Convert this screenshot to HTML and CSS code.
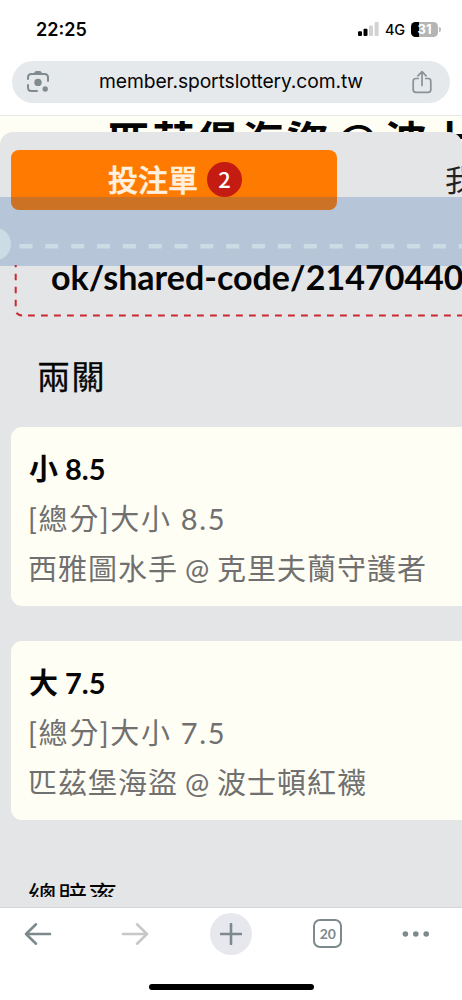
FILE: index.html
```html
<!DOCTYPE html>
<html lang="zh-Hant">
<head>
<meta charset="utf-8">
<meta name="viewport" content="width=device-width, initial-scale=1">
<title>投注單</title>
<link rel="stylesheet" href="styles.css">
</head>
<body>
<div class="screen">
  <header class="status">
    <span class="clock">22:25</span>
    <div class="indicators">
      <svg class="signal" width="21" height="14" viewBox="0 0 21 14"><rect x="0" y="9.2" width="4" height="4.8" rx="1"/><rect x="5.5" y="6.7" width="4" height="7.3" rx="1"/><rect class="weak" x="11" y="3.6" width="4" height="10.4" rx="1"/><rect class="weak" x="16.6" y="0" width="4" height="14" rx="1"/></svg>
      <span class="network">4G</span>
      <div class="battery"><span>31</span></div>
      <i class="battery-tip"></i>
    </div>
  </header>
  <div class="address-row">
    <div class="address">
      <svg width="24" height="24" viewBox="0 0 24 24" class="lens"><path d="M2 9V7.5Q2 4 5.5 4H18.5Q22 4 22 7.5V11M2 15V17.5Q2 21 5.5 21H11"/><path class="fill" d="M7 4.5L9 1.6Q9.5 1 10.5 1H13.5Q14.5 1 15 1.6L17 4.5Z"/><circle class="fill" cx="12" cy="12.4" r="3.7"/><circle class="fill" cx="19.2" cy="19" r="2.7"/></svg>
      <span class="url">member.sportslottery.com.tw</span>
      <svg width="20" height="24" viewBox="0 0 20 24" class="share"><path d="M6.3 8.5H4Q1.2 8.5 1.2 11.3V19.7Q1.2 22.3 4 22.3H16Q18.8 22.3 18.8 19.7V11.3Q18.8 8.5 16 8.5H13.7M10 15.5V1.8M5.9 5.9L10 1.7L14.1 5.9"/></svg>
    </div>
  </div>
  <div class="match-title"><span>匹茲堡海盜 @ 波士</span></div>
  <main class="slip">
    <nav class="tabs">
      <div class="tab active"><span>投注單</span><b class="count">2</b></div>
      <div class="tab mine"><span>我</span></div>
    </nav>
    <section class="share-box">
      <div class="link"><span>ok/shared-code/21470440</span></div>
      <svg class="outline" width="462" height="52" viewBox="0 0 462 52"><path d="M15.7 0V44Q15.7 50.5 22.2 50.5" stroke-dasharray="6.5 6.5" stroke-dashoffset="4.3"/><path d="M28 50.5H470" stroke-dasharray="6.8 6.2"/></svg>
    </section>
    <h2 class="parlay">兩關</h2>
    <article class="bet">
      <h3>小 8.5</h3>
      <p class="market">[總分]大小 8.5</p>
      <p class="teams">西雅圖水手 @ 克里夫蘭守護者</p>
    </article>
    <article class="bet">
      <h3>大 7.5</h3>
      <p class="market">[總分]大小 7.5</p>
      <p class="teams">匹茲堡海盜 @ 波士頓紅襪</p>
    </article>
    <div class="odds"><span>總賠率</span></div>
    <svg class="ticket-edge" width="462" height="69" viewBox="0 0 462 69"><rect class="band" width="462" height="69"/><circle cx="-5.5" cy="47" r="16.5"/><path d="M19.5 49.3H470" stroke-dasharray="13 12.84"/></svg>
  </main>
  <footer class="toolbar">
    <div class="buttons">
      <svg width="28" height="24" viewBox="0 0 28 24"><path d="M26 12H2M12 2.3L2 12L12 21.7"/></svg>
      <svg class="disabled" width="28" height="24" viewBox="0 0 28 24"><path d="M2 12H26M16 2.3L26 12L16 21.7"/></svg>
      <div class="new-tab"><svg width="22" height="22" viewBox="0 0 22 22"><path d="M1 11H21M11 1V21"/></svg></div>
      <div class="tab-count">20</div>
      <svg class="more" width="28" height="8" viewBox="0 0 28 8"><circle cx="3.4" cy="4" r="2.8"/><circle cx="13.8" cy="4" r="2.8"/><circle cx="24.2" cy="4" r="2.8"/></svg>
    </div>
    <div class="home"></div>
  </footer>
</div>
</body>
</html>
```
FILE: styles.css
```css
* { box-sizing: border-box; }
body { margin: 0; background: #fff; color: #050505; font-family: Lato, "Noto Sans CJK TC", sans-serif; }
h2, h3, p { margin: 0; }
svg { display: block; flex: none; }
.screen { width: 462px; height: 1000px; overflow: hidden; display: flex; flex-direction: column; }
.status { height: 61px; flex: none; padding: 20px 21px 0 36px; display: flex; justify-content: space-between; font-family: Inter, sans-serif; }
.clock { font-size: 18px; line-height: 20px; font-weight: 600; letter-spacing: 0; }
.indicators { display: flex; height: 19px; align-items: center; }
.signal { margin-top: -1px; }
.signal .weak { fill: #d2d2d2; }
.network { margin-left: 6px; width: 20px; font-size: 14.5px; font-weight: 500; letter-spacing: -.3px; }
.battery { margin-left: 6px; width: 27px; height: 15px; border-radius: 4.5px; background: linear-gradient(90deg, #000 8px, #b5b5b5 8px); color: #fff; font: bold 13px/15px Inter, sans-serif; text-align: center; }
.battery-tip { width: 2px; height: 5px; margin-left: 1px; border-radius: 0 2px 2px 0; background: #bbb; }
.address-row { height: 54px; flex: none; padding: 0 12px; }
.address { height: 42px; border-radius: 21px; background: #e5e9ec; display: flex; align-items: center; padding: 0 18px 0 14px; }
.lens { fill: none; stroke: #808b90; stroke-width: 2; stroke-linecap: round; }
.lens .fill { fill: #808b90; stroke: none; }
.url { margin: -2px 0 0 49px; width: 274px; font: 19.3px/24px Inter, sans-serif; letter-spacing: -.11px; white-space: nowrap; }
.share { margin-left: 39px; fill: none; stroke: #8a9297; stroke-width: 1.7; stroke-linecap: round; stroke-linejoin: round; }
.match-title { height: 30px; margin-bottom: -13px; flex: none; overflow: hidden; background: #fffef5; border-top: 1px solid #e6e7e7; padding-left: 108px; }
.match-title span { display: block; margin-top: -2px; font: bold 42px/50px "Noto Sans CJK TC", sans-serif; letter-spacing: 2.6px; word-spacing: -8px; white-space: nowrap; }
.slip { position: relative; height: 775px; flex: none; background: #e4e5e7; border-radius: 13px 13px 0 0; overflow: hidden; }
.tabs { display: flex; height: 133px; padding: 17.5px 0 0 11px; }
.tab { height: 60px; flex: none; display: flex; align-items: center; font-size: 30px; font-weight: 400; }
.tab span { margin-top: -4px; }
.active { width: 326px; border-radius: 8px; background: #ff7a00; color: #fff0df; font-weight: 500; padding-left: 97px; }
.active span { font-family: "Noto Sans CJK TC", sans-serif; -webkit-text-stroke: .6px #fff0df; }
.count { margin-left: 9px; width: 35px; height: 35px; border-radius: 50%; background: #c41b13; color: #fff; font: 500 22px/33px "Noto Sans CJK TC", sans-serif; text-align: center; }
.mine { margin-left: 108px; color: #222; white-space: nowrap; }
.share-box { position: relative; height: 52px; }
.link { height: 52px; overflow: hidden; padding-left: 51px; }
.link span { display: block; margin-top: -8px; font-size: 34px; line-height: 40px; font-weight: 700; white-space: nowrap; }
.outline { position: absolute; inset: 0; fill: none; stroke: #cb2930; stroke-width: 2; }
.parlay { height: 110px; padding: 36px 0 0 37px; font: 400 33px/44px "Noto Sans CJK TC", sans-serif; letter-spacing: 1.5px; -webkit-text-stroke: .3px #050505; }
.bet { height: 179px; margin: 0 -10px 35px 11px; padding: 17px 0 0 17px; border-radius: 11px; background: #fffef5; white-space: nowrap; color: #707070; font-size: 29px; }
.bet h3 { padding-left: 1px; color: #050505; font-size: 29px; line-height: 50px; font-weight: 700; }
.bet p { line-height: 50px; font-weight: 400; letter-spacing: 1px; }
.bet .market { letter-spacing: 1.65px; }
.bet .teams { word-spacing: -1.5px; }
.odds { height: 42px; padding-left: 28px; overflow: hidden; }
.odds span { display: block; margin-top: 17px; font-size: 29px; line-height: 50px; letter-spacing: 1px; }
.ticket-edge { position: absolute; left: 0; top: 64.5px; }
.ticket-edge .band { fill: #1256a4; opacity: .22; }
.ticket-edge circle { fill: #ccdce5; }
.ticket-edge path { stroke: #ccdce5; stroke-width: 4.5; }
.toolbar { flex: 1; border-top: 1px solid #d6d7d9; padding-top: 4px; }
.buttons { display: grid; grid-template-columns: repeat(4, 96.5px) 79px; margin-left: -10px; align-items: center; justify-items: center; height: 43px; fill: none; stroke: #7e898d; stroke-width: 2.6; stroke-linecap: round; stroke-linejoin: round; }
.disabled { stroke: #c8c8c8; }
.new-tab { width: 42px; height: 42px; border-radius: 50%; background: #e7e8ed; display: grid; place-items: center; }
.tab-count { width: 29px; height: 29px; border: 2.4px solid #7e898d; border-radius: 7px; color: #7e898d; font: bold 14px/25px Lato, sans-serif; text-align: center; }
.more { fill: #7e898d; stroke: none; }
.home { width: 165px; height: 6px; margin: 29px auto 0; border-radius: 3px; background: #000; }
```
